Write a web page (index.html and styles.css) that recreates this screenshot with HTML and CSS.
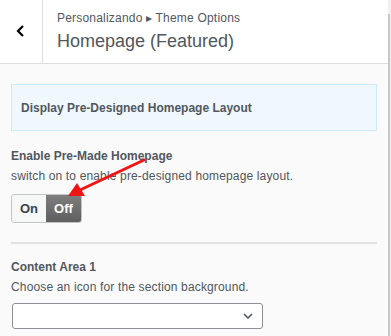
FILE: index.html
```html
<!DOCTYPE html>
<html lang="en">
<head>
    <meta charset="UTF-8">
    <title>Homepage (Featured)</title>
    <link rel="stylesheet" href="styles.css">
</head>
<body>
    <div class="panel">
        <header class="section-head">
            <button class="back-btn" aria-label="Back">
                <svg width="10" height="12" viewBox="0 0 10 12">
                    <path d="M7 1 L2 6 L7 11" fill="none" stroke="#000" stroke-width="2.2"/>
                </svg>
            </button>
            <div class="head-title">
                <span class="crumb">Personalizando &#9656; Theme Options</span>
                <h2>Homepage (Featured)</h2>
            </div>
        </header>

        <div class="controls">
            <div class="notice">Display Pre-Designed Homepage Layout</div>

            <div class="control">
                <span class="control-title">Enable Pre-Made Homepage</span>
                <span class="control-desc">switch on to enable pre-designed homepage layout.</span>
                <div class="switch">
                    <span class="switch-opt">On</span>
                    <span class="switch-opt active">Off</span>
                </div>
            </div>

            <hr class="divider">

            <div class="control">
                <span class="control-title second">Content Area 1</span>
                <span class="control-desc">Choose an icon for the section background.</span>
                <div class="select-box">
                    <svg width="10" height="6" viewBox="0 0 10 6">
                        <path d="M1 1 L5 5 L9 1" fill="none" stroke="#50575e" stroke-width="1.6"/>
                    </svg>
                </div>
            </div>
        </div>

        <!-- annotation arrow -->
        <svg class="arrow" width="100" height="50" viewBox="0 0 100 50">
            <line x1="84" y1="5" x2="20" y2="35" stroke="#f01414" stroke-width="3" stroke-linecap="round"/>
            <polygon points="8,41 25,41 17,28" fill="#f01414"/>
        </svg>
    </div>
    <div class="scrollbar"><div class="thumb"></div></div>
</body>
</html>
```

FILE: styles.css
```css
* {
    box-sizing: border-box;
    margin: 0;
    padding: 0;
}

body {
    font-family: 'Liberation Sans', Arial, sans-serif;
    background-color: #fafafa;
    color: #50575e;
    width: 391px;
    height: 336px;
    display: flex;
    overflow: hidden;
}

.panel {
    position: relative;
    flex: 1;
    display: flex;
    flex-direction: column;
}

.section-head {
    display: flex;
    height: 64px;
    background-color: white;
    border-bottom: 1px solid #dcdcde;
}

.back-btn {
    width: 43px;
    background: white;
    border: none;
    border-right: 1px solid #dcdcde;
    display: flex;
    align-items: center;
    justify-content: center;
    padding-bottom: 2px;
}

.head-title {
    display: flex;
    flex-direction: column;
    padding: 11px 0 0 14px;
}

.crumb {
    font-size: 12px;
    line-height: 15px;
    letter-spacing: 0.2px;
}

.head-title h2 {
    font-size: 18px;
    font-weight: normal;
    line-height: 23px;
    margin-top: 4px;
}

.controls {
    padding: 20px 11px 0 11px;
    display: flex;
    flex-direction: column;
}

.notice {
    height: 47px;
    background-color: #f0f8fe;
    border: 1px solid #cfe9fb;
    padding-left: 9px;
    display: flex;
    align-items: center;
    font-size: 12px;
    font-weight: bold;
}

.control {
    display: flex;
    flex-direction: column;
}

.control-title {
    font-size: 12px;
    font-weight: bold;
    line-height: 16px;
    margin-top: 17px;
}

.control-title.second {
    margin-top: 15px;
}

.control-desc {
    font-size: 12px;
    line-height: 15px;
    margin-top: 5px;
    letter-spacing: 0.15px;
}

.switch {
    display: flex;
    width: 71px;
    height: 29px;
    margin-top: 10px;
    border: 1px solid #c3c4c7;
    border-radius: 3px;
    overflow: hidden;
}

.switch-opt {
    width: 34px;
    display: flex;
    align-items: center;
    justify-content: center;
    font-size: 13px;
    font-weight: bold;
    color: #3c434a;
    background-color: #f6f7f7;
}

.switch-opt.active {
    flex: 1;
    color: white;
    background: linear-gradient(#7d7d7d, #5f5f5f);
}

.divider {
    border: none;
    border-top: 2px solid #e2e2e2;
    margin-top: 19px;
}

.select-box {
    width: 251px;
    height: 26px;
    margin: 8px 0 0 1px;
    background-color: white;
    border: 1px solid #8c8f94;
    border-radius: 3px;
    display: flex;
    align-items: center;
    justify-content: flex-end;
    padding-right: 9px;
}

.arrow {
    position: absolute;
    left: 60px;
    top: 155px;
}

.scrollbar {
    width: 3px;
    background-color: #f0f0f0;
}

.thumb {
    margin-top: 14px;
    width: 2px;
    height: 322px;
    background-color: #c8c8c8;
}
```
